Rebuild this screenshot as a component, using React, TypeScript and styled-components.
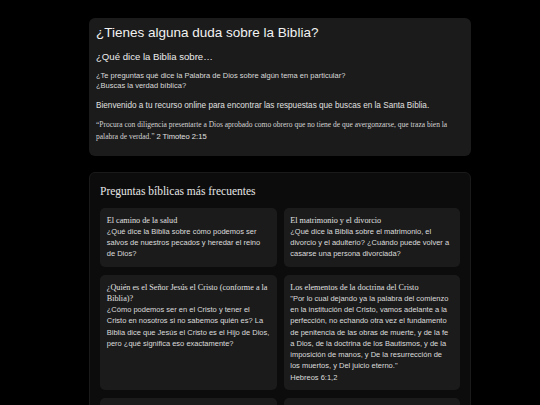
import React from "react"
import styled, { createGlobalStyle } from "styled-components"

const GlobalStyle = createGlobalStyle`
    html, body {
        margin: 0;
        padding: 0;
        background: #000;
        overflow: hidden;
    }
    body {
        font-family: "Liberation Sans", Arial, sans-serif;
        color: #dcdcdc;
    }
`

type Question = {
    title: string
    body: string
    reference?: string
}

const questions: Question[] = [
    {
        title: "El camino de la salud",
        body: "¿Qué dice la Biblia sobre cómo podemos ser salvos de nuestros pecados y heredar el reino de Dios?",
    },
    {
        title: "El matrimonio y el divorcio",
        body: "¿Qué dice la Biblia sobre el matrimonio, el divorcio y el adulterio? ¿Cuándo puede volver a casarse una persona divorciada?",
    },
    {
        title: "¿Quién es el Señor Jesús el Cristo (conforme a la Biblia)?",
        body: "¿Cómo podemos ser en el Cristo y tener el Cristo en nosotros si no sabemos quién es? La Biblia dice que Jesús el Cristo es el Hijo de Dios, pero ¿qué significa eso exactamente?",
    },
    {
        title: "Los elementos de la doctrina del Cristo",
        body: "\"Por lo cual dejando ya la palabra del comienzo en la institución del Cristo, vamos adelante a la perfección, no echando otra vez el fundamento de penitencia de las obras de muerte, y de la fe a Dios, de la doctrina de los Bautismos, y de la imposición de manos, y De la resurrección de los muertos, y Del juicio eterno.\"",
        reference: "Hebreos 6:1,2",
    },
    {
        title: "La fe y las obras",
        body: "¿Somos salvos solamente por la fe, o también son necesarias las obras?",
    },
    {
        title: "¿Qué dice la Biblia sobre el diezmo y las ofrendas?",
        body: "¿Debe un cristiano dar el diezmo hoy en día?",
    },
]

export default function App() {
    return (
        <>
            <GlobalStyle />
            <SPage>
                <SIntroCard>
                    <STitle>¿Tienes alguna duda sobre la Biblia?</STitle>
                    <SSubtitle>¿Qué dice la Biblia sobre…</SSubtitle>
                    <SSmallText>
                        ¿Te preguntas qué dice la Palabra de Dios sobre algún tema en particular?
                        <br />
                        ¿Buscas la verdad bíblica?
                    </SSmallText>
                    <SWelcome>
                        Bienvenido a tu recurso online para encontrar las respuestas que buscas en la Santa Biblia.
                    </SWelcome>
                    <SQuote>
                        “Procura con diligencia presentarte a Dios aprobado como obrero que no tiene de que
                        avergonzarse, que traza bien la palabra de verdad.” <SQuoteRef>2 Timoteo 2:15</SQuoteRef>
                    </SQuote>
                </SIntroCard>

                <SFaqCard>
                    <SFaqHeading>Preguntas bíblicas más frecuentes</SFaqHeading>
                    <SGrid>
                        {questions.map((q) => (
                            <SQuestion key={q.title}>
                                <SQuestionTitle>{q.title}</SQuestionTitle>
                                <SQuestionBody>{q.body}</SQuestionBody>
                                {q.reference && <SQuestionBody>{q.reference}</SQuestionBody>}
                            </SQuestion>
                        ))}
                    </SGrid>
                </SFaqCard>
            </SPage>
        </>
    )
}

const SPage = styled.div`
    width: 382px;
    margin-left: 89px;
    padding-top: 18px;
    display: flex;
    flex-direction: column;
    gap: 16px;
`

const SIntroCard = styled.section`
    background: #1b1b1b;
    border-radius: 6px;
    padding: 7px 8px 13px 7px;
`

const STitle = styled.h1`
    margin: 0;
    font-size: 13.5px;
    line-height: 16px;
    font-weight: 400;
    color: #f2f2f2;
`

const SSubtitle = styled.h2`
    margin: 10px 0 0;
    font-size: 9.6px;
    line-height: 12px;
    font-weight: 400;
    color: #ececec;
`

const SSmallText = styled.p`
    margin: 8px 0 0;
    font-size: 7.5px;
    line-height: 10px;
    color: #dadada;
`

const SWelcome = styled.p`
    margin: 8.5px 0 0;
    font-size: 8.2px;
    line-height: 11px;
    color: #e0e0e0;
`

const SQuote = styled.p`
    margin: 8.5px 0 0;
    font-family: "Liberation Serif", "Times New Roman", serif;
    font-size: 7.5px;
    line-height: 12px;
    color: #d4d4d4;
`

const SQuoteRef = styled.span`
    font-family: "Liberation Sans", Arial, sans-serif;
    font-size: 7.6px;
    line-height: 12px;
    color: #e0e0e0;
`

const SFaqCard = styled.section`
    background: #0c0c0c;
    border: 1px solid #1a1a1a;
    border-radius: 6px;
    padding: 11px 10px 12px;
`

const SFaqHeading = styled.h2`
    margin: 0 0 10px;
    font-family: "Liberation Serif", "Times New Roman", serif;
    font-size: 11.5px;
    line-height: 14px;
    font-weight: 400;
    color: #e6e6e6;
`

const SGrid = styled.div`
    display: grid;
    grid-template-columns: 1fr 1fr;
    gap: 8px 7px;
`

const SQuestion = styled.article`
    background: #1b1b1b;
    border-radius: 5px;
    padding: 6.5px 6.75px 7.5px;
`

const SQuestionTitle = styled.h3`
    margin: 0;
    font-family: "Liberation Serif", "Times New Roman", serif;
    font-size: 8.2px;
    line-height: 11.25px;
    font-weight: 400;
    color: #e0e0e0;
`

const SQuestionBody = styled.p`
    margin: 0;
    font-size: 7.5px;
    line-height: 11.25px;
    color: #dcdcdc;
`
